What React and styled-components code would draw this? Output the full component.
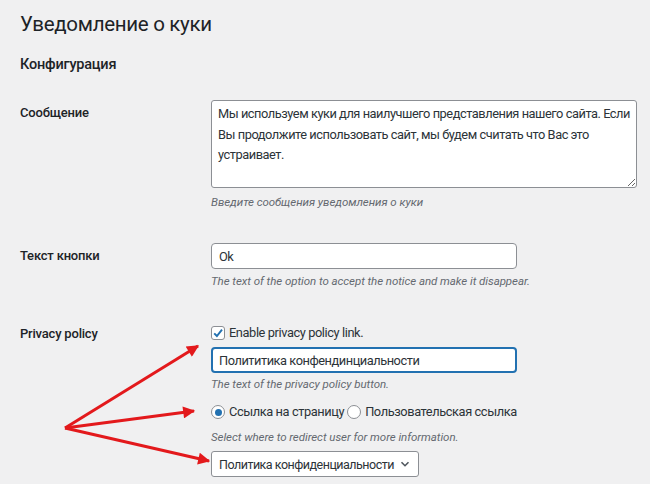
import React from "react";
import styled, { createGlobalStyle } from "styled-components";

const FONT = `Roboto, "Noto Sans", sans-serif`;

const Global = createGlobalStyle`
  html, body {
    margin: 0;
    padding: 0;
    background: #f0f0f1;
  }
  body {
    font-family: ${FONT};
    color: #1d2327;
  }
`;

const Page = styled.div`
  position: relative;
  width: 650px;
  height: 484px;
  overflow: hidden;
  padding: 0 20px;
  box-sizing: border-box;
`;

const Title = styled.h1`
  margin: 0;
  padding-top: 8px;
  font-size: 20.5px;
  font-weight: 400;
  letter-spacing: -0.3px;
  line-height: 32px;
  color: #1d2327;
`;

const Section = styled.h2`
  margin: 15px 0 0;
  font-size: 14.5px;
  font-weight: 500;
  letter-spacing: -0.2px;
  line-height: 20px;
  color: #1d2327;
`;

const Row = styled.div`
  display: grid;
  grid-template-columns: 191px 1fr;
  margin-top: ${(p) => p.$top}px;
`;

const Label = styled.div`
  font-size: 13px;
  font-weight: 500;
  letter-spacing: -0.2px;
  line-height: 20px;
  padding-top: ${(p) => p.$pad || 3}px;
  color: #1d2327;
`;

const Field = styled.div`
  display: flex;
  flex-direction: column;
  align-items: flex-start;
`;

const Area = styled.textarea`
  width: 426px;
  height: 88px;
  box-sizing: border-box;
  border: 1px solid #8c8f94;
  border-radius: 3px;
  background: #fff;
  padding: 3px 4px 3px 6px;
  font-family: ${FONT};
  font-size: 12.8px;
  letter-spacing: -0.45px;
  line-height: 20.5px;
  color: #2c3338;
  resize: vertical;
  outline: none;
  margin: 0;
`;

const Input = styled.input`
  width: 306px;
  height: 26px;
  box-sizing: border-box;
  border: ${(p) => (p.$focus ? "2px solid #2271b1" : "1px solid #8c8f94")};
  border-radius: 4px;
  background: #fff;
  padding: 0 ${(p) => (p.$focus ? 6 : 7)}px;
  font-family: ${FONT};
  font-size: 12.8px;
  letter-spacing: -0.45px;
  color: #2c3338;
  outline: none;
  margin: 0;
`;

const Desc = styled.p`
  margin: ${(p) => p.$top || 5}px 0 0;
  font-size: 11.5px;
  font-style: italic;
  letter-spacing: -0.05px;
  line-height: 18px;
  color: #646970;
`;

const Choice = styled.label`
  display: inline-flex;
  align-items: center;
  gap: 4px;
  font-size: 12.8px;
  letter-spacing: -0.4px;
  line-height: 20px;
  color: #2c3338;
  margin-right: 3px;
`;

const ChoiceRow = styled.div`
  display: flex;
  align-items: center;
  margin-top: ${(p) => p.$top || 0}px;
  margin-bottom: ${(p) => p.$bottom || 0}px;
`;

const Box = styled.span`
  width: 14px;
  height: 14px;
  box-sizing: border-box;
  border: 1px solid #8c8f94;
  border-radius: ${(p) => (p.$round ? "50%" : "3px")};
  background: #fff;
  display: inline-flex;
  align-items: center;
  justify-content: center;
  flex-shrink: 0;
`;

const Dot = styled.span`
  width: 7px;
  height: 7px;
  border-radius: 50%;
  background: #2271b1;
`;

const Select = styled.div`
  margin-top: 5px;
  width: 208px;
  height: 26px;
  box-sizing: border-box;
  border: 1px solid #8c8f94;
  border-radius: 3px;
  background: #fff;
  display: flex;
  align-items: center;
  gap: 4px;
  padding: 0 8px 0 7px;
  font-size: 12.5px;
  letter-spacing: -0.5px;
  color: #2c3338;
  white-space: nowrap;
  span {
    flex: 1;
  }
  svg {
    flex-shrink: 0;
  }
`;

const Arrows = styled.svg`
  position: absolute;
  left: 0;
  top: 0;
  pointer-events: none;
`;

export default function App() {
  const from = [65, 428];
  const tips = [
    [198, 346],
    [194, 411],
    [209, 461],
  ];
  return (
    <>
      <Global />
      <Page>
        <Title>Уведомление о куки</Title>
        <Section>Конфигурация</Section>

        <Row $top={25}>
          <Label $pad={3}>Сообщение</Label>
          <Field>
            <Area
              readOnly
              defaultValue="Мы используем куки для наилучшего представления нашего сайта. Если Вы продолжите использовать сайт, мы будем считать что Вас это устраивает."
            />
            <Desc $top={5}>Введите сообщения уведомления о куки</Desc>
          </Field>
        </Row>

        <Row $top={32}>
          <Label $pad={3}>Текст кнопки</Label>
          <Field>
            <Input readOnly defaultValue="Ok" />
            <Desc $top={3}>The text of the option to accept the notice and make it disappear.</Desc>
          </Field>
        </Row>

        <Row $top={33}>
          <Label $pad={1}>Privacy policy</Label>
          <Field>
            <ChoiceRow $bottom={4}>
              <Choice>
                <Box>
                  <svg width="12" height="12" viewBox="0 0 12 12">
                    <path d="M2.2 6.3 L4.9 9 L10 2.6" fill="none" stroke="#2271b1" strokeWidth="1.9" />
                  </svg>
                </Box>
                Enable privacy policy link.
              </Choice>
            </ChoiceRow>
            <Input $focus readOnly defaultValue="Полититика конфендинциальности" />
            <Desc $top={2}>The text of the privacy policy button.</Desc>
            <ChoiceRow $top={9}>
              <Choice>
                <Box $round>
                  <Dot />
                </Box>
                Ссылка на страницу
              </Choice>
              <Choice>
                <Box $round />
                Пользовательская ссылка
              </Choice>
            </ChoiceRow>
            <Desc $top={6}>Select where to redirect user for more information.</Desc>
            <Select>
              <span>Политика конфиденциальности</span>
              <svg width="10" height="10" viewBox="0 0 10 10">
                <path d="M1.5 3.2 L5 6.7 L8.5 3.2" fill="none" stroke="#50575e" strokeWidth="1.6" />
              </svg>
            </Select>
          </Field>
        </Row>

        <Arrows width="650" height="484" viewBox="0 0 650 484">
          <defs>
            <marker id="head" viewBox="0 0 10 10" refX="9" refY="5" markerWidth="5" markerHeight="4" orient="auto" markerUnits="strokeWidth">
              <path d="M0 0 L10 5 L0 10 z" fill="#e3191c" />
            </marker>
          </defs>
          {tips.map(([x, y], i) => (
            <line
              key={i}
              x1={from[0]}
              y1={from[1]}
              x2={x}
              y2={y}
              stroke="#e3191c"
              strokeWidth="3"
              markerEnd="url(#head)"
            />
          ))}
        </Arrows>
      </Page>
    </>
  );
}
